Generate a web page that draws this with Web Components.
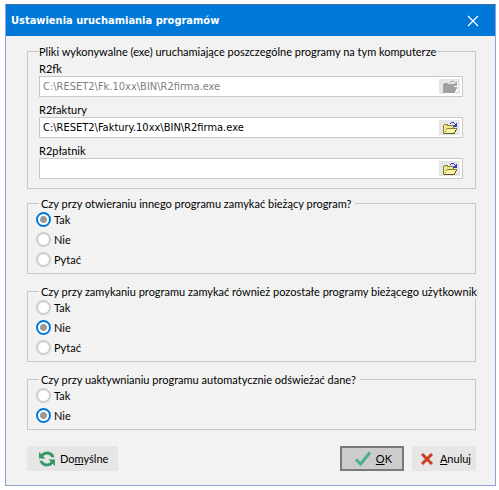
<!DOCTYPE html>
<html lang="pl">
<head>
<meta charset="utf-8">
<title>Ustawienia uruchamiania programów</title>
<style>
body {
  margin: 0;
  background: #ffffff;
  color: #000000;
  font-family: Lato, Tahoma, sans-serif;
  font-size: 11px;
  line-height: 15px;
}
</style>
</head>
<body>
<settings-dialog heading="Ustawienia uruchamiania programów">
  <group-box heading="Pliki wykonywalne (exe) uruchamiające poszczególne programy na tym komputerze">
    <path-field label="R2fk" value="C:\RESET2\Fk.10xx\BIN\R2firma.exe" disabled></path-field>
    <path-field label="R2faktury" value="C:\RESET2\Faktury.10xx\BIN\R2firma.exe"></path-field>
    <path-field label="R2płatnik" value=""></path-field>
  </group-box>
  <choice-group heading="Czy przy otwieraniu innego programu zamykać bieżący program?" options="Tak,Nie,Pytać" value="Tak"></choice-group>
  <choice-group heading="Czy przy zamykaniu programu zamykać również pozostałe programy bieżącego użytkownik" options="Tak,Nie,Pytać" value="Nie"></choice-group>
  <choice-group heading="Czy przy uaktywnianiu programu automatycznie odświeżać dane?" options="Tak,Nie" value="Nie"></choice-group>
  <icon-button slot="left" icon="refresh">Do<u>m</u>yślne</icon-button>
  <icon-button slot="right" icon="check" primary><u>O</u>K</icon-button>
  <icon-button slot="right" icon="cross"><u>A</u>nuluj</icon-button>
</settings-dialog>

<script>
const DialogTemplate = document.createElement('template');
DialogTemplate.innerHTML = `
<style>
:host {
  display: block;
  margin: 4px 3px 4px 5px;
  border: 1px solid #8ba5d0;
  border-top-color: #3f6ea8;
  background: #f2f2f2;
}
header {
  display: flex;
  align-items: center;
  justify-content: space-between;
  height: 31px;
  padding: 0 16px 0 5px;
  background: #0078d7;
  color: #ffffff;
}
h1 {
  margin: 0;
  font-family: "DejaVu Sans Condensed", Tahoma, sans-serif;
  font-size: 11px;
  font-weight: bold;
}
.close {
  display: block;
  padding: 0;
  border: 0;
  background: none;
  color: inherit;
}
svg {
  display: block;
}
.content {
  display: flex;
  flex-direction: column;
  gap: 10px;
  padding: 8px 19px 0 21px;
}
footer {
  display: flex;
  justify-content: space-between;
  padding: 16px 19px 14px 21px;
}
.right {
  display: flex;
  gap: 8px;
}
</style>
<header>
  <h1></h1>
  <button class="close" type="button" aria-label="Zamknij">
    <svg width="12" height="12" viewBox="0 0 12 12"><path d="M1 1L11 11M11 1L1 11" stroke="currentColor" stroke-width="1.3" fill="none"/></svg>
  </button>
</header>
<div class="content"><slot></slot></div>
<footer>
  <slot name="left"></slot>
  <div class="right"><slot name="right"></slot></div>
</footer>
`;

class SettingsDialog extends HTMLElement {
  constructor() {
    super();
    this.attachShadow({ mode: 'open' });
    this.shadowRoot.appendChild(DialogTemplate.content.cloneNode(true));
    this.shadowRoot.querySelector('h1').textContent = this.getAttribute('heading');
  }
}

// frame shared by both kinds of groups
const frameStyle = `
:host {
  display: block;
  min-width: 0;
}
fieldset {
  min-width: 0;
  margin: 0;
  border: 1px solid #c8c8c8;
}
legend {
  box-sizing: border-box;
  white-space: nowrap;
  background: #f2f2f2;
}
`;

const GroupBoxTemplate = document.createElement('template');
GroupBoxTemplate.innerHTML = `
<style>
${frameStyle}
:host {
  margin-bottom: -3px;
}
fieldset {
  padding: 2px 12px 9px 11px;
}
legend {
  padding: 0;
}
.fields {
  display: flex;
  flex-direction: column;
  gap: 5px;
}
</style>
<fieldset>
  <legend></legend>
  <div class="fields"><slot></slot></div>
</fieldset>
`;

class GroupBox extends HTMLElement {
  constructor() {
    super();
    this.attachShadow({ mode: 'open' });
    this.shadowRoot.appendChild(GroupBoxTemplate.content.cloneNode(true));
    this.shadowRoot.querySelector('legend').textContent = this.getAttribute('heading');
  }
}

const PathFieldTemplate = document.createElement('template');
PathFieldTemplate.innerHTML = `
<style>
:host {
  display: block;
}
label {
  display: block;
}
.box {
  display: flex;
  align-items: center;
  box-sizing: border-box;
  height: 21px;
  padding-right: 2px;
  border: 1px solid #c8c8c8;
  background: #ffffff;
}
input {
  flex: 1;
  min-width: 0;
  padding: 0 3px;
  border: 0;
  outline: 0;
  background: none;
  color: #000000;
  font-family: "DejaVu Sans Condensed", Tahoma, sans-serif;
  font-size: 11px;
}
input:disabled {
  color: #808080;
}
button {
  display: flex;
  align-items: center;
  justify-content: center;
  width: 21px;
  height: 15px;
  padding: 0;
  border: 0;
  background: #e6e6e6;
}
svg {
  --edge: #85853a;
  --dark: #55552c;
  --back: #f0e68c;
  --front: #fff3a0;
  --arrow: #3838c8;
}
:host([disabled]) svg {
  --edge: #a0a0a0;
  --dark: #a0a0a0;
  --back: #a0a0a0;
  --front: #a0a0a0;
  --arrow: #a0a0a0;
  filter: drop-shadow(1px 1px 0 #ffffff);
}
</style>
<label for="path"></label>
<div class="box">
  <input id="path" type="text">
  <button type="button" aria-label="Wybierz plik">
    <svg width="14" height="12" viewBox="0 0 14 12" shape-rendering="crispEdges">
      <path fill="var(--edge)" d="M1 2h4v1h6v3h3v2h-1v2h-1v2H0V3h1z"/>
      <path fill="var(--back)" d="M1 3h3v1h6v2H4v1H3v2H2v2H1z"/>
      <path fill="var(--front)" d="M4 7h9v1h-1v2h-1v1H2v-1h1V8h1z"/>
      <path fill="var(--dark)" d="M13 7h1v1h-1zM12 8h1v2h-1zM11 10h1v1h-1zM1 11h10v1H1z"/>
      <path fill="var(--arrow)" d="M8 0h3v1H8zM7 1h1v1H7zM11 1h1v1h-1zM13 1h1v4h-4V4h1V3h1V2h1z"/>
    </svg>
  </button>
</div>
`;

class PathField extends HTMLElement {
  constructor() {
    super();
    this.attachShadow({ mode: 'open' });
    this.shadowRoot.appendChild(PathFieldTemplate.content.cloneNode(true));
    const input = this.shadowRoot.querySelector('input');
    this.shadowRoot.querySelector('label').textContent = this.getAttribute('label');
    input.value = this.getAttribute('value');
    input.disabled = this.hasAttribute('disabled');
    this.shadowRoot.querySelector('button').disabled = this.hasAttribute('disabled');
  }
}

const ChoiceGroupTemplate = document.createElement('template');
ChoiceGroupTemplate.innerHTML = `
<style>
${frameStyle}
fieldset {
  padding: 0 0 5px 8px;
}
legend {
  margin-left: 3px;
  padding: 0 4px 0 2px;
}
.options {
  display: flex;
  flex-direction: column;
  align-items: flex-start;
  gap: 3px;
}
label {
  display: flex;
  align-items: center;
  gap: 3px;
  height: 17px;
}
input {
  appearance: none;
  box-sizing: border-box;
  width: 15px;
  height: 15px;
  margin: 0;
  border: 2px solid #cccccc;
  border-radius: 50%;
  background: #ffffff;
}
input:checked {
  border-color: #0078d7;
  background: radial-gradient(circle, #999999 3px, #ffffff 4px);
}
</style>
<fieldset>
  <legend></legend>
  <div class="options"></div>
</fieldset>
`;

class ChoiceGroup extends HTMLElement {
  constructor() {
    super();
    this.attachShadow({ mode: 'open' });
    this.shadowRoot.appendChild(ChoiceGroupTemplate.content.cloneNode(true));
    this.shadowRoot.querySelector('legend').textContent = this.getAttribute('heading');
    const options = this.shadowRoot.querySelector('.options');
    this.getAttribute('options').split(',').forEach((text) => {
      const label = document.createElement('label');
      const input = document.createElement('input');
      input.type = 'radio';
      input.name = 'choice';
      input.value = text;
      input.checked = text === this.getAttribute('value');
      label.append(input, text);
      options.appendChild(label);
    });
  }
}

const icons = {
  refresh: `<svg width="16" height="16" viewBox="0 0 16 16" fill="#339966">
    <path d="M0 1L0 7.5H6.5L4.3 5.2C5.2 4.1 6.5 3.4 8.2 3.4C10.2 3.4 11.7 4.5 12.4 6.2H15.4C14.6 2.8 11.8.6 8.3.6C5.8.6 3.8 1.6 2.4 3.3Z"/>
    <path d="M16 15V8.5H9.5L11.7 10.8C10.8 11.9 9.5 12.6 7.8 12.6C5.8 12.6 4.3 11.5 3.6 9.8H.6C1.4 13.2 4.2 15.4 7.7 15.4C10.2 15.4 12.2 14.4 13.6 12.7Z"/></svg>`,
  check: `<svg width="16" height="16" viewBox="0 0 16 16"><path d="M1 8.5L5.5 13L15 1.5" fill="none" stroke="#4caf87" stroke-width="3"/></svg>`,
  cross: `<svg width="12" height="12" viewBox="0 0 12 12"><path d="M1 1L11 11M11 1L1 11" fill="none" stroke="#cc3b22" stroke-width="3"/></svg>`
};

const IconButtonTemplate = document.createElement('template');
IconButtonTemplate.innerHTML = `
<style>
:host {
  display: block;
}
button {
  display: flex;
  align-items: center;
  gap: 5px;
  box-sizing: border-box;
  height: 25px;
  padding: 0 10px 0 12px;
  border: 0;
  background: #e6e6e6;
  color: #000000;
  font: inherit;
}
:host([icon="cross"]) button {
  gap: 7px;
  padding: 0 5px 0 9px;
}
:host([primary]) button {
  padding: 0 10px 0 13px;
  border: 2px solid #7a7a7a;
  background: #cccccc;
}
.icon {
  display: flex;
}
</style>
<button type="button"><span class="icon"></span><span><slot></slot></span></button>
`;

class IconButton extends HTMLElement {
  constructor() {
    super();
    this.attachShadow({ mode: 'open' });
    this.shadowRoot.appendChild(IconButtonTemplate.content.cloneNode(true));
    this.shadowRoot.querySelector('.icon').innerHTML = icons[this.getAttribute('icon')];
  }
}

customElements.define('settings-dialog', SettingsDialog);
customElements.define('group-box', GroupBox);
customElements.define('path-field', PathField);
customElements.define('choice-group', ChoiceGroup);
customElements.define('icon-button', IconButton);
</script>
</body>
</html>
